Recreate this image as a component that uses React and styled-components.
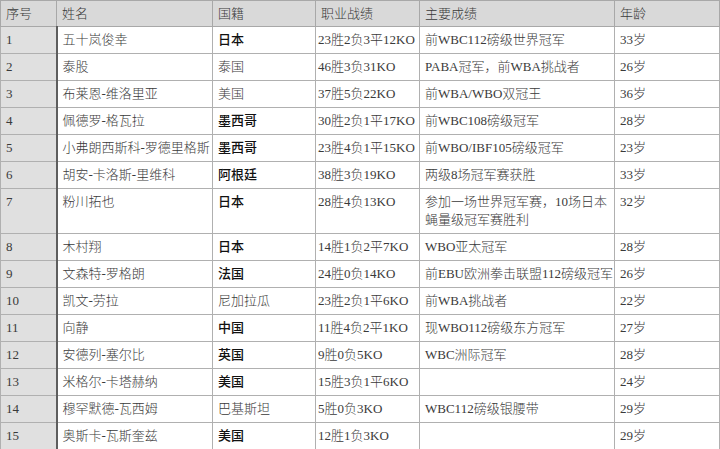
import React from "react";
import styled, { createGlobalStyle } from "styled-components";

const Global = createGlobalStyle`
  html, body { margin: 0; padding: 0; background: #ffffff; }
  body { font-family: "Liberation Serif", "Noto Sans CJK SC", serif; }
`;

const Table = styled.table`
  border-collapse: collapse;
  table-layout: fixed;
  width: 719px;
  font-size: 13px;
  color: #3a3a3a;
`;

const HeadCell = styled.th`
  background: #d9d9d9;
  border: 1px solid #a8a8a8;
  text-align: left;
  font-weight: 300;
  padding: 3.5px 5px;
  line-height: 18px;
  color: #3a3a3a;
`;

const Cell = styled.td`
  border: 1px solid #b0b0b0;
  padding: 4px 5px 3.5px;
  line-height: ${(p) => (p.$wrap ? "18px" : "18.5px")};
  vertical-align: top;
  font-weight: ${(p) => (p.$bold ? 500 : 300)};
  color: ${(p) => (p.$bold ? "#111" : "#3a3a3a")};
  white-space: ${(p) => (p.$wrap ? "normal" : "nowrap")};
  overflow: visible;
`;

const IndexCell = styled(Cell)`
  background: #e0e0e0;
  border-right: 2px solid #5e5e5e;
`;

const RecordCell = styled(Cell)`
  padding-left: 2px;
  padding-right: 0;
`;

const rows = [
  ["五十岚俊幸", "日本", true, "23胜2负3平12KO", "前WBC112磅级世界冠军", "33岁"],
  ["泰股", "泰国", false, "46胜3负31KO", "PABA冠军，前WBA挑战者", "26岁"],
  ["布莱恩-维洛里亚", "美国", false, "37胜5负22KO", "前WBA/WBO双冠王", "36岁"],
  ["佩德罗-格瓦拉", "墨西哥", true, "30胜2负1平17KO", "前WBC108磅级冠军", "28岁"],
  ["小弗朗西斯科-罗德里格斯", "墨西哥", true, "23胜4负1平15KO", "前WBO/IBF105磅级冠军", "23岁"],
  ["胡安-卡洛斯-里维科", "阿根廷", true, "38胜3负19KO", "两级8场冠军赛获胜", "33岁"],
  ["粉川拓也", "日本", true, "28胜4负13KO", "参加一场世界冠军赛，10场日本蝇量级冠军赛胜利", "32岁", true],
  ["木村翔", "日本", true, "14胜1负2平7KO", "WBO亚太冠军", "28岁"],
  ["文森特-罗格朗", "法国", true, "24胜0负14KO", "前EBU欧洲拳击联盟112磅级冠军", "26岁"],
  ["凯文-劳拉", "尼加拉瓜", false, "23胜2负1平6KO", "前WBA挑战者", "22岁"],
  ["向静", "中国", true, "11胜4负2平1KO", "现WBO112磅级东方冠军", "27岁"],
  ["安德列-塞尔比", "英国", true, "9胜0负5KO", "WBC洲际冠军", "28岁"],
  ["米格尔-卡塔赫纳", "美国", true, "15胜3负1平6KO", "", "24岁"],
  ["穆罕默德-瓦西姆", "巴基斯坦", false, "5胜0负3KO", "WBC112磅级银腰带", "29岁"],
  ["奥斯卡-瓦斯奎兹", "美国", true, "12胜1负3KO", "", "29岁"],
];

export default function App() {
  return (
    <>
      <Global />
      <Table>
        <colgroup>
          <col style={{ width: 56 }} />
          <col style={{ width: 156 }} />
          <col style={{ width: 103 }} />
          <col style={{ width: 104 }} />
          <col style={{ width: 195 }} />
          <col style={{ width: 105 }} />
        </colgroup>
        <thead>
          <tr>
            <HeadCell>序号</HeadCell>
            <HeadCell>姓名</HeadCell>
            <HeadCell>国籍</HeadCell>
            <HeadCell>职业战绩</HeadCell>
            <HeadCell>主要成绩</HeadCell>
            <HeadCell>年龄</HeadCell>
          </tr>
        </thead>
        <tbody>
          {rows.map((r, i) => (
            <tr key={i}>
              <IndexCell>{i + 1}</IndexCell>
              <Cell>{r[0]}</Cell>
              <Cell $bold={r[2]}>{r[1]}</Cell>
              <RecordCell>{r[3]}</RecordCell>
              <Cell $wrap={r[6]}>{r[4]}</Cell>
              <Cell>{r[5]}</Cell>
            </tr>
          ))}
        </tbody>
      </Table>
    </>
  );
}
